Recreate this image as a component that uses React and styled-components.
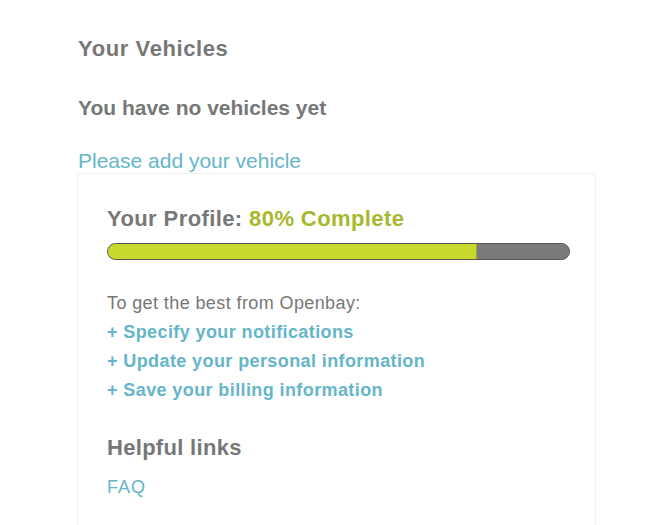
import React from "react";
import styled, { createGlobalStyle } from "styled-components";

const Global = createGlobalStyle`
  html, body { margin: 0; padding: 0; background: #ffffff; }
  body { font-family: "Liberation Sans", Arial, Helvetica, sans-serif; color: #777777; }
  * { box-sizing: border-box; }
`;

const Page = styled.div`
  width: 650px;
  padding: 36px 54px 0 77px;
`;

const Title = styled.h2`
  margin: 0 0 0 1px;
  font-size: 22px;
  line-height: 26.4px;
  font-weight: bold;
  letter-spacing: 0.6px;
  color: #777777;
`;

const SubTitle = styled.h3`
  margin: 33px 0 0 1px;
  font-size: 21px;
  line-height: 25.2px;
  font-weight: bold;
  color: #777777;
`;

const AddLink = styled.a`
  display: block;
  margin: 27px 0 0 1px;
  font-size: 21px;
  line-height: 25.2px;
  color: #66b5c9;
  text-decoration: none;
`;

const Card = styled.section`
  border: 1px solid #efefef;
  border-bottom: none;
  border-radius: 3px 3px 0 0;
  padding: 32px 26px 40px 29px;
  min-height: 360px;
`;

const ProfileTitle = styled.h3`
  margin: 0;
  font-size: 22px;
  line-height: 26.4px;
  font-weight: bold;
  letter-spacing: 0.4px;
  color: #777777;
`;

const Accent = styled.span`
  color: #a8b82c;
`;

const Track = styled.div`
  margin-top: 11px;
  height: 17px;
  width: 463px;
  background: #7a7a7a;
  border: 1px solid #585858;
  border-radius: 9px;
  overflow: hidden;
  display: flex;
`;

const Fill = styled.div`
  height: 100%;
  background: #c6d92c;
  border-right: 1px solid #9aa53c;
`;

const Tips = styled.div`
  margin-top: 29px;
  font-size: 18px;
  line-height: 28.8px;
  letter-spacing: 0.4px;
`;

const Intro = styled.div`
  color: #777777;
`;

const TipLink = styled.a`
  display: block;
  color: #66b5c9;
  font-weight: bold;
  text-decoration: none;
`;

const LinksTitle = styled.h3`
  margin: 31px 0 0;
  font-size: 22px;
  line-height: 26.4px;
  font-weight: bold;
  letter-spacing: 0.3px;
  color: #777777;
`;

const Faq = styled.a`
  display: block;
  margin-top: 11px;
  font-size: 18px;
  line-height: 28.8px;
  letter-spacing: 1px;
  color: #66b5c9;
  text-decoration: none;
`;

export default function App() {
  const percent = 80;
  return (
    <>
      <Global />
      <Page>
        <Title>Your Vehicles</Title>
        <SubTitle>You have no vehicles yet</SubTitle>
        <AddLink href="#">Please add your vehicle</AddLink>
        <Card>
          <ProfileTitle>
            Your Profile: <Accent>{percent}% Complete</Accent>
          </ProfileTitle>
          <Track>
            <Fill style={{ width: `${percent}%` }} />
          </Track>
          <Tips>
            <Intro>To get the best from Openbay:</Intro>
            <TipLink href="#">+ Specify your notifications</TipLink>
            <TipLink href="#">+ Update your personal information</TipLink>
            <TipLink href="#">+ Save your billing information</TipLink>
          </Tips>
          <LinksTitle>Helpful links</LinksTitle>
          <Faq href="#">FAQ</Faq>
        </Card>
      </Page>
    </>
  );
}
